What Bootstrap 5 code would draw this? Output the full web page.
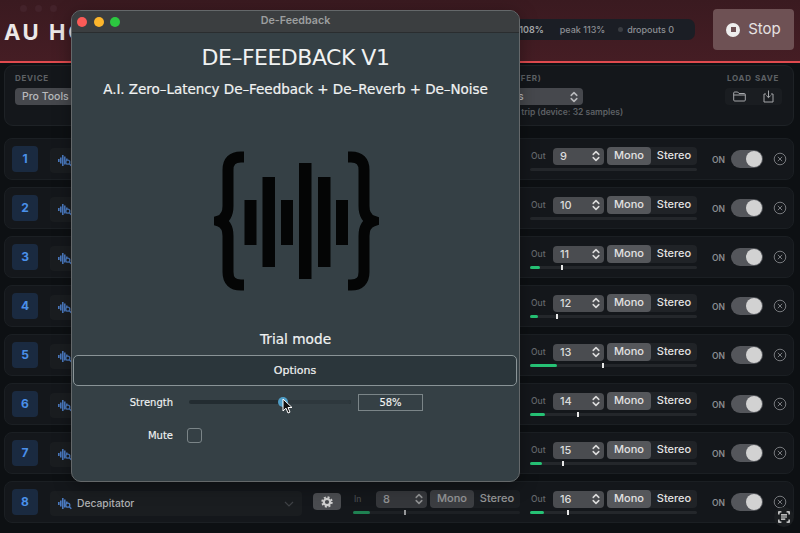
<!DOCTYPE html>
<html lang="en">
<head>
<meta charset="utf-8">
<title>De-Feedback</title>
<link href="https://cdn.jsdelivr.net/npm/bootstrap@5.3.0/dist/css/bootstrap.min.css" rel="stylesheet">
<style>
html,body{height:533px;overflow:hidden}
body{background:#0d1013;font-family:Inter,"Liberation Sans",sans-serif;color:#cfd1d3;position:relative}
.host-head{height:63px;background:linear-gradient(#3a1a20,#451d24);border-bottom:2px solid #e04a4e;padding:9px 6px 0 4px}
.host-title{font-size:22px;font-weight:700;letter-spacing:2.6px;color:#ece8e8;line-height:1;width:200px;margin-top:12px}
.dim-dot{width:7px;height:7px;border-radius:50%;background:#43222a}
.dim-lights{position:absolute;left:20px;top:5px}
.status-pill{height:21px;margin-top:10px;margin-right:18px;background:#1b1e25;border-radius:7px;padding:0 21px 0 110px;font-size:9px;font-weight:500;color:#8d8f94}
.status-pill b{font-weight:600;color:#a8aaae}
.drop-part{margin-left:-3px}
.grey-dot{width:5px;height:5px;border-radius:50%;background:#3a3d42}
.stop-btn{width:81px;height:41px;background:#6e5154;border-radius:4px;color:#e6e2e2;font-size:15px;border:0;padding:0}
.stop-ico{width:14px;height:14px;border-radius:50%;background:#eee;display:flex;align-items:center;justify-content:center}
.stop-ico i{display:block;width:5px;height:5px;background:#6e5154}
.host-main{padding:2px 6px 0 4px}
.device-panel{height:61px;border:1px solid #1e2226;border-radius:9px;background:#14171b;padding:6px 14px 0 10px;display:flex}
.tiny-label{font-size:8px;font-weight:700;letter-spacing:.7px;color:#5e6165;line-height:12px;white-space:nowrap}
.fake-select{height:17px;border-radius:4px;background:#46484d;font-size:10.5px;font-weight:500;color:#b9babd;display:flex;align-items:center;padding:0 5px 0 7px;margin-top:4px}
.dev-col{width:130px}
.buf-col{width:126px;margin-left:312px}
.buf-tag{margin-left:42px}
.buf-val{margin-left:28px}
.note-line{font-size:8.5px;font-weight:600;color:#5e6165;margin:1px 0 0 38px;white-space:nowrap}
.file-col{margin-left:auto;width:52px}
.file-btns{height:17px;background:#1a1d21;border-radius:4px;margin:4px -3px 0 -2px;color:#a5a7aa}
.row-list{display:flex;flex-direction:column;gap:7px;margin-top:12px}
.chan-row{height:42px;border:1px solid #1b1f23;border-radius:8px;background:#14171b;display:flex;align-items:flex-start;padding:6px 6px 0 7px}
.chan-num{width:26px;height:26px;border-radius:4px;background:#1a2a40;color:#4a90ea;font-weight:700;font-size:12px;display:flex;align-items:center;justify-content:center;margin-top:1px}
.plug-pick{width:252px;height:25px;background:#1a1d20;border-radius:4px;margin:3px 0 0 12px;padding:0 8px;display:flex;align-items:center;gap:5px;font-size:10.3px;font-weight:500;color:#aeb0b2}
.gear-btn{width:28px;height:17px;border-radius:4px;background:#4a4c50;margin:5px 0 0 11px;display:flex;align-items:center;justify-content:center}
.io-box{width:167px;flex:none}
.io-in{margin-left:12px;opacity:.62}
.io-out{margin-left:auto}
.io-line{display:flex;align-items:center;height:18px;margin-top:2px}
.io-tag{width:23px;padding-left:1px;font-size:8.5px;font-weight:500;color:#65686c}
.step-box{width:51px;height:17px;background:#4a4c50;border-radius:4px;font-size:11px;font-weight:500;color:#dcdcdc;display:flex;align-items:center;justify-content:space-between;padding:0 4px 0 7px}
.mode-pair{width:90px;height:18px;margin-left:3px;border-radius:4px;background:#202327;display:flex;font-size:11px;font-weight:500;color:#e2e2e2;line-height:17px;text-align:center}
.mode-on{width:44px;background:#55575b;border-radius:4px}
.mode-off{flex:1}
.lvl-track{height:3px;background:#24272b;border-radius:2px;margin-top:3px;position:relative}
.lvl-fill{position:absolute;left:0;top:0;height:3px;border-radius:2px;background:#26c275}
.lvl-tick{position:absolute;top:-1px;width:2px;height:5px;background:#e6e6e6}
.on-text{font-size:8.5px;font-weight:600;color:#8a8c90;margin:9px 0 0 15px;width:19px}
.tog{width:32px;height:18px;border-radius:9px;background:#54565b;margin:5px 0 0 0;display:flex;justify-content:flex-end;padding:1px}
.tog i{display:block;width:16px;height:16px;border-radius:50%;background:#d2d2d2}
.close-ico{margin:7px 0 0 10px;flex:none}
.plugin-win{position:absolute;left:71px;top:10px;width:449px;height:472px;background:#354045;border:1px solid #64686a;border-radius:10px;overflow:hidden;display:flex;flex-direction:column;box-shadow:0 4px 18px rgba(0,0,0,.35);font-family:"DejaVu Sans","Liberation Sans",sans-serif;color:#f0f2f2}
.win-bar{height:22px;background:#3b3e40;border-bottom:1px solid #2a2d2f;flex:none;display:flex;align-items:center;justify-content:center;position:relative;font-family:Inter,sans-serif;font-size:10.7px;font-weight:600;color:#9c9e9f}
.lights{position:absolute;left:5px;top:6px;display:flex;gap:6.5px}
.lights i{display:block;width:10px;height:10px;border-radius:50%}
.win-h1{font-size:22px;font-weight:400;line-height:28px;text-align:center;margin:11px 0 0;letter-spacing:-.5px}
.win-h2{font-size:13.5px;font-weight:400;line-height:18px;text-align:center;margin:8px 0 0;letter-spacing:-.04px;-webkit-text-stroke:.2px #f0f2f2}
.logo-svg{display:block;margin:52px 0 0 142px;width:165px;height:142px}
.trial-line{font-size:13.7px;line-height:18px;text-align:center;margin-top:38px;-webkit-text-stroke:.2px #f0f2f2}
.opt-btn{height:31px;margin:7px 2px 0 1px;padding-top:2px;background:#2b363b;border:1px solid #8a9497;border-radius:5px;color:#f0f2f2;font-size:11px;font-weight:500;display:flex;align-items:center;justify-content:center;-webkit-text-stroke:.2px #f0f2f2}
.ctl-row{display:flex;align-items:center;font-size:10px;-webkit-text-stroke:.15px #f0f2f2}
.ctl-name{width:101px;text-align:right}
.strength-row{height:18px;margin-top:7px}
.mute-row{height:16px;margin-top:16px}
.win-track{width:162px;height:4px;margin-left:16px;background:#232c31;border-radius:2px;position:relative}
.win-rest{position:absolute;left:94px;right:0;top:0;bottom:0;background:#2e383d;border-radius:2px}
.win-thumb{position:absolute;left:89px;top:-3px;width:10px;height:10px;border-radius:50%;background:#4f9dc6}
.val-box{width:65px;height:17px;margin-left:7px;border:1px solid #7b8588;text-align:center;line-height:15px;font-size:10px}
.mute-box{width:15px;height:15px;margin-left:14px;border:1px solid #7b8588;border-radius:3px}
.cursor-ico{position:absolute;left:282px;top:398px}
.shot-ico{position:absolute;left:774px;top:507px;width:20px;height:20px;border-radius:50%;background:#1b1e21;display:flex;align-items:center;justify-content:center}
</style>
</head>
<body>
<svg width="0" height="0" class="position-absolute">
  <symbol id="updown" viewBox="0 0 8 12"><path d="M1.2 4.400 4 1.600l2.800 2.800M1.200 7.600 4 10.400l2.800-2.800" fill="none" stroke="currentColor" stroke-width="1.500" stroke-linecap="round" stroke-linejoin="round"/></symbol>
  <symbol id="wave" viewBox="0 0 14 13"><path d="M.8 5v3M2.800 3.500v6M4.800 1v11M6.800 2.500v8M8.800 4.500v1.500" stroke="#4a7ac0" stroke-width="1.600" fill="none"/><circle cx="9.800" cy="8.200" r="2" fill="none" stroke="#4a7ac0" stroke-width="1.300"/><path d="m11.300 9.700 2 2" stroke="#4a7ac0" stroke-width="1.400"/></symbol>
  <symbol id="closer" viewBox="0 0 14 14"><circle cx="7" cy="7" r="5.800" fill="none" stroke="#77797d" stroke-width="1"/><path d="m4.800 4.800 4.400 4.400m0-4.400-4.400 4.400" stroke="#77797d" stroke-width="1"/></symbol>
</svg>

<header class="host-head d-flex">
  <div class="host-title">AU HOST</div>
  <div class="dim-lights d-flex gap-2"><span class="dim-dot"></span><span class="dim-dot"></span><span class="dim-dot"></span></div>
  <div class="status-pill d-flex align-items-center gap-3 ms-auto">
    <b>108%</b><span>peak 113%</span><span class="drop-part d-flex align-items-center gap-1"><span class="grey-dot"></span>dropouts 0</span>
  </div>
  <button class="stop-btn d-flex align-items-center justify-content-center gap-2" type="button"><span class="stop-ico"><i></i></span>Stop</button>
</header>

<main class="host-main">
  <section class="device-panel">
    <div class="dev-col">
      <div class="tiny-label">DEVICE</div>
      <div class="fake-select">Pro Tools</div>
    </div>
    <div class="buf-col">
      <div class="tiny-label buf-tag">(BUFFER)</div>
      <div class="fake-select justify-content-between"><span class="buf-val">1.3 ms</span><svg width="8" height="12"><use href="#updown"/></svg></div>
      <div class="note-line">round trip (device: 32 samples)</div>
    </div>
    <div class="file-col">
      <div class="tiny-label d-flex justify-content-between"><span>LOAD</span><span>SAVE</span></div>
      <div class="file-btns d-flex justify-content-around align-items-center">
        <svg width="13" height="11" viewBox="0 0 13 11"><path d="M.7 9V2q0-1 1-1h3l1.300 1.500h5.300q1 0 1 1V9q0 1-1 1h-9.600q-1 0-1-1ZM.7 4h11.600" fill="none" stroke="currentColor"/></svg>
        <svg width="11" height="13" viewBox="0 0 11 13"><path d="M3 4H1v8h9V4H8M5.500 .5v7M3.300 5.500l2.200 2.200 2.200-2.200" fill="none" stroke="currentColor"/></svg>
      </div>
    </div>
  </section>

  <div class="row-list">
    <div class="chan-row">
      <div class="chan-num">1</div>
      <div class="plug-pick"><svg width="14" height="13"><use href="#wave"/></svg></div>
      <div class="io-box io-out">
        <div class="io-line"><span class="io-tag">Out</span><div class="step-box">9<svg width="8" height="12"><use href="#updown"/></svg></div><div class="mode-pair"><span class="mode-on">Mono</span><span class="mode-off">Stereo</span></div></div>
        <div class="lvl-track"></div>
      </div>
      <span class="on-text">ON</span><div class="tog"><i></i></div><svg class="close-ico" width="14" height="14"><use href="#closer"/></svg>
    </div>
    <div class="chan-row">
      <div class="chan-num">2</div>
      <div class="plug-pick"><svg width="14" height="13"><use href="#wave"/></svg></div>
      <div class="io-box io-out">
        <div class="io-line"><span class="io-tag">Out</span><div class="step-box">10<svg width="8" height="12"><use href="#updown"/></svg></div><div class="mode-pair"><span class="mode-on">Mono</span><span class="mode-off">Stereo</span></div></div>
        <div class="lvl-track"></div>
      </div>
      <span class="on-text">ON</span><div class="tog"><i></i></div><svg class="close-ico" width="14" height="14"><use href="#closer"/></svg>
    </div>
    <div class="chan-row">
      <div class="chan-num">3</div>
      <div class="plug-pick"><svg width="14" height="13"><use href="#wave"/></svg></div>
      <div class="io-box io-out">
        <div class="io-line"><span class="io-tag">Out</span><div class="step-box">11<svg width="8" height="12"><use href="#updown"/></svg></div><div class="mode-pair"><span class="mode-on">Mono</span><span class="mode-off">Stereo</span></div></div>
        <div class="lvl-track"><div class="lvl-fill" style="width:10px"></div><div class="lvl-tick" style="left:31px"></div></div>
      </div>
      <span class="on-text">ON</span><div class="tog"><i></i></div><svg class="close-ico" width="14" height="14"><use href="#closer"/></svg>
    </div>
    <div class="chan-row">
      <div class="chan-num">4</div>
      <div class="plug-pick"><svg width="14" height="13"><use href="#wave"/></svg></div>
      <div class="io-box io-out">
        <div class="io-line"><span class="io-tag">Out</span><div class="step-box">12<svg width="8" height="12"><use href="#updown"/></svg></div><div class="mode-pair"><span class="mode-on">Mono</span><span class="mode-off">Stereo</span></div></div>
        <div class="lvl-track"><div class="lvl-fill" style="width:8px"></div><div class="lvl-tick" style="left:26px"></div></div>
      </div>
      <span class="on-text">ON</span><div class="tog"><i></i></div><svg class="close-ico" width="14" height="14"><use href="#closer"/></svg>
    </div>
    <div class="chan-row">
      <div class="chan-num">5</div>
      <div class="plug-pick"><svg width="14" height="13"><use href="#wave"/></svg></div>
      <div class="io-box io-out">
        <div class="io-line"><span class="io-tag">Out</span><div class="step-box">13<svg width="8" height="12"><use href="#updown"/></svg></div><div class="mode-pair"><span class="mode-on">Mono</span><span class="mode-off">Stereo</span></div></div>
        <div class="lvl-track"><div class="lvl-fill" style="width:27px"></div><div class="lvl-tick" style="left:72px"></div></div>
      </div>
      <span class="on-text">ON</span><div class="tog"><i></i></div><svg class="close-ico" width="14" height="14"><use href="#closer"/></svg>
    </div>
    <div class="chan-row">
      <div class="chan-num">6</div>
      <div class="plug-pick"><svg width="14" height="13"><use href="#wave"/></svg></div>
      <div class="io-box io-out">
        <div class="io-line"><span class="io-tag">Out</span><div class="step-box">14<svg width="8" height="12"><use href="#updown"/></svg></div><div class="mode-pair"><span class="mode-on">Mono</span><span class="mode-off">Stereo</span></div></div>
        <div class="lvl-track"><div class="lvl-fill" style="width:15px"></div><div class="lvl-tick" style="left:47px"></div></div>
      </div>
      <span class="on-text">ON</span><div class="tog"><i></i></div><svg class="close-ico" width="14" height="14"><use href="#closer"/></svg>
    </div>
    <div class="chan-row">
      <div class="chan-num">7</div>
      <div class="plug-pick"><svg width="14" height="13"><use href="#wave"/></svg></div>
      <div class="io-box io-out">
        <div class="io-line"><span class="io-tag">Out</span><div class="step-box">15<svg width="8" height="12"><use href="#updown"/></svg></div><div class="mode-pair"><span class="mode-on">Mono</span><span class="mode-off">Stereo</span></div></div>
        <div class="lvl-track"><div class="lvl-fill" style="width:12px"></div><div class="lvl-tick" style="left:32px"></div></div>
      </div>
      <span class="on-text">ON</span><div class="tog"><i></i></div><svg class="close-ico" width="14" height="14"><use href="#closer"/></svg>
    </div>
    <div class="chan-row">
      <div class="chan-num">8</div>
      <div class="plug-pick"><svg width="14" height="13"><use href="#wave"/></svg>Decapitator<svg class="ms-auto" width="10" height="6" viewBox="0 0 10 6"><path d="m1 1 4 4 4-4" fill="none" stroke="#3f4246" stroke-width="1.200"/></svg></div>
      <div class="gear-btn"><svg width="12" height="12" viewBox="0 0 12 12"><circle cx="6" cy="6" r="3.200" fill="none" stroke="#d0d0d0" stroke-width="2.200"/><circle cx="6" cy="6" r="4.800" fill="none" stroke="#d0d0d0" stroke-width="1.800" stroke-dasharray="2 1.770"/></svg></div>
      <div class="io-box io-in">
        <div class="io-line"><span class="io-tag">In</span><div class="step-box">8<svg width="8" height="12"><use href="#updown"/></svg></div><div class="mode-pair"><span class="mode-on">Mono</span><span class="mode-off">Stereo</span></div></div>
        <div class="lvl-track"><div class="lvl-fill" style="width:17px"></div><div class="lvl-tick" style="left:51px"></div></div>
      </div>
      <div class="io-box io-out">
        <div class="io-line"><span class="io-tag">Out</span><div class="step-box">16<svg width="8" height="12"><use href="#updown"/></svg></div><div class="mode-pair"><span class="mode-on">Mono</span><span class="mode-off">Stereo</span></div></div>
        <div class="lvl-track"><div class="lvl-fill" style="width:14px"></div><div class="lvl-tick" style="left:37px"></div></div>
      </div>
      <span class="on-text">ON</span><div class="tog"><i></i></div><svg class="close-ico" width="14" height="14"><use href="#closer"/></svg>
    </div>
  </div>
</main>

<section class="plugin-win">
  <div class="win-bar">
    <div class="lights"><i style="background:#fb5b57"></i><i style="background:#fdb62c"></i><i style="background:#2cc840"></i></div>
    De-Feedback
  </div>
  <h1 class="win-h1">DE–FEEDBACK V1</h1>
  <p class="win-h2">A.I. Zero–Latency De–Feedback + De–Reverb + De–Noise</p>
  <svg class="logo-svg" viewBox="214 150 165 142" aria-label="De-Feedback logo">
    <g fill="#040505"><rect x="244.500" y="200" width="12" height="45"/><rect x="262.500" y="177" width="12.500" height="90"/><rect x="281" y="200" width="12" height="45"/><rect x="299" y="163" width="12.500" height="116"/><rect x="318" y="177" width="12.500" height="90"/><rect x="336" y="200" width="12" height="45"/></g>
    <g fill="none" stroke="#040505" stroke-width="11">
      <path d="M244 157H241Q228 157 228 170V206Q228 218 219 221Q228 224 228 236V272Q228 285 241 285H244"/>
      <path d="M348 157H351Q364 157 364 170V206Q364 218 373 221Q364 224 364 236V272Q364 285 351 285H348"/>
    </g>
  </svg>
  <div class="trial-line">Trial mode</div>
  <div class="opt-btn">Options</div>
  <div class="ctl-row strength-row"><span class="ctl-name">Strength</span><div class="win-track"><div class="win-rest"></div><div class="win-thumb"></div></div><div class="val-box">58%</div></div>
  <div class="ctl-row mute-row"><span class="ctl-name">Mute</span><div class="mute-box"></div></div>
</section>

<svg class="cursor-ico" width="11" height="17" viewBox="0 0 11 17"><path d="M1 1v12l3-2.800 2 4.800 2-.9-2-4.600h4Z" fill="#111" stroke="#fff"/></svg>
<div class="shot-ico"><svg width="12" height="12" viewBox="0 0 14 14"><path d="M1 4V1h3M10 1h3v3M13 10v3h-3M4 13H1v-3" fill="none" stroke="#eee" stroke-width="1.500"/><path d="M3.500 4.500h7M3.500 7h7M3.500 9.500h5" stroke="#eee" stroke-width="1.300"/></svg></div>

<script src="https://cdn.jsdelivr.net/npm/bootstrap@5.3.0/dist/js/bootstrap.bundle.min.js"></script>
</body>
</html>
